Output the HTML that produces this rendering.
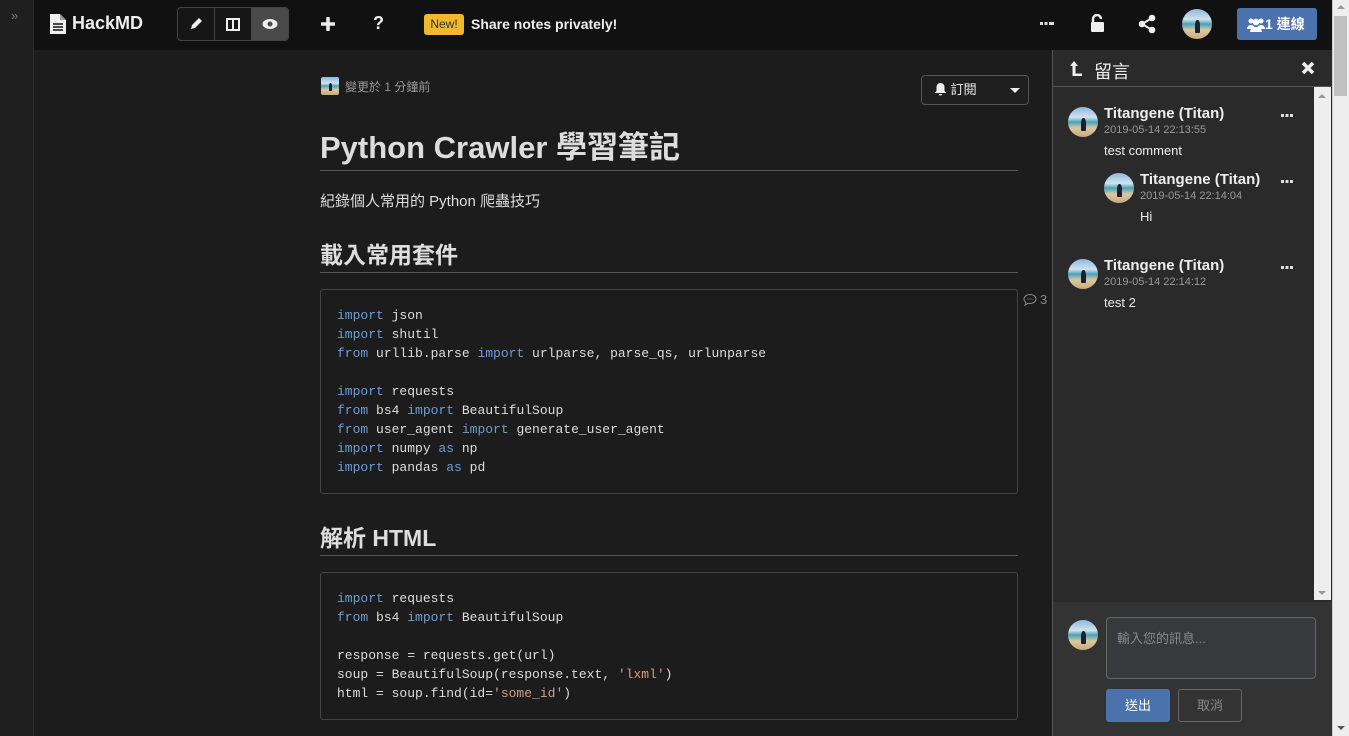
<!DOCTYPE html><html><head><meta charset="utf-8"><style>
*{margin:0;padding:0;box-sizing:border-box}
body{width:1349px;height:736px;overflow:hidden;background:#1c1c1c;font-family:"Liberation Sans","Noto Sans CJK TC",sans-serif;color:#ddd;position:relative}
.a{position:absolute}
.av{position:absolute;border-radius:50%;background:linear-gradient(#8fb8dc 0%,#cfe3ee 35%,#4aa0b8 50%,#d9c9a3 70%,#caa97a 100%);overflow:hidden}
.av:after{content:"";position:absolute;left:42%;top:35%;width:18%;height:45%;background:#1a2030;border-radius:40% 40% 10% 10%}
.code{position:absolute;left:320px;width:698px;border:1px solid #444;border-radius:3px;background:#1c1c1c;font-family:"Liberation Mono","DejaVu Sans Mono",monospace;font-size:13px;line-height:19px;color:#ddd;padding:16px 16px;white-space:pre}
.k{color:#6d9cd4}.s{color:#d69d85}
.h{position:absolute;left:320px;width:698px;border-bottom:1px solid #555;font-weight:bold;color:#ddd}
.nm{font-weight:bold;font-size:15px;color:#eee}
.dt{font-size:11px;color:#999}
.dots{position:absolute;width:12px;height:3px;background:linear-gradient(90deg,#ddd 0,#ddd 3px,transparent 3px,transparent 4.5px,#ddd 4.5px,#ddd 7.5px,transparent 7.5px,transparent 9px,#ddd 9px)}
</style></head><body>
<div class="a" style="left:0;top:0;width:34px;height:736px;background:#1f1f1f;border-right:1px solid #2c2c2c"></div>
<div class="a" style="left:11px;top:8px;color:#777;font-size:13px">»</div>
<div class="a" style="left:34px;top:0;width:1298px;height:50px;background:#111"></div>
<svg class="a" style="left:49px;top:13px" width="18" height="22" viewBox="0 0 18 22"><path d="M1 1h10l6 6v14H1z" fill="#eee"/><path d="M11 1v6h6" fill="#999"/><path d="M4 11h10M4 14h10M4 17h10" stroke="#111" stroke-width="1.5"/></svg>
<div class="a" style="left:72px;top:13px;font-size:18px;font-weight:bold;color:#eee">HackMD</div>
<div class="a" style="left:177px;top:7px;width:112px;height:34px;border:1px solid #444;border-radius:4px;overflow:hidden;background:#161616">
 <div class="a" style="left:36px;top:0;width:1px;height:34px;background:#444"></div>
 <div class="a" style="left:73px;top:0;width:39px;height:34px;background:#4a4a4a"></div>
 <svg class="a" style="left:11px;top:9px" width="14" height="14" viewBox="0 0 14 14"><path d="M2 12l1-4 7-7 3 3-7 7z" fill="#eee"/></svg>
 <svg class="a" style="left:48px;top:10px" width="14" height="13"><rect x="1" y="1" width="12" height="11" fill="none" stroke="#eee" stroke-width="2"/><path d="M7 1v11" stroke="#eee" stroke-width="2"/></svg>
 <svg class="a" style="left:84px;top:10px" width="16" height="12"><ellipse cx="8" cy="6" rx="7.5" ry="5" fill="#eee"/><circle cx="8" cy="6" r="2.5" fill="#4a4a4a"/></svg>
</div>
<svg class="a" style="left:320px;top:16px" width="16" height="16"><path d="M8 1v14M1 8h14" stroke="#eee" stroke-width="3.5"/></svg>
<div class="a" style="left:373px;top:13px;font-size:18px;font-weight:bold;color:#eee">?</div>
<div class="a" style="left:424px;top:14px;width:40px;height:21px;background:#f0b92d;border-radius:3px;color:#333;font-size:12px;text-align:center;line-height:21px">New!</div>
<div class="a" style="left:471px;top:16px;font-size:14px;font-weight:bold;color:#eee">Share notes privately!</div>
<div class="dots" style="left:1040px;top:22px;width:14px"></div>
<svg class="a" style="left:1090px;top:14px" width="15" height="19"><path d="M3 8V5a4 4 0 0 1 8 0" stroke="#eee" stroke-width="2.4" fill="none"/><rect x="1" y="8" width="13" height="10" rx="1" fill="#eee"/></svg>
<svg class="a" style="left:1138px;top:14px" width="18" height="20"><circle cx="14" cy="4" r="3.3" fill="#eee"/><circle cx="4" cy="10" r="3.3" fill="#eee"/><circle cx="14" cy="16" r="3.3" fill="#eee"/><path d="M14 4L4 10l10 6" stroke="#eee" stroke-width="2" fill="none"/></svg>
<div class="av" style="left:1182px;top:9px;width:30px;height:30px"></div>
<div class="a" style="left:1237px;top:8px;width:80px;height:32px;background:#4a72ac;border-radius:3px;color:#fff;font-size:14px;font-weight:bold;line-height:32px;padding-left:10px">
<svg style="vertical-align:-3px" width="18" height="15"><circle cx="4" cy="4" r="2.5" fill="#fff"/><circle cx="14" cy="4" r="2.5" fill="#fff"/><circle cx="9" cy="5" r="3.3" fill="#fff"/><path d="M0 12a4 4 0 0 1 8 0zM10 12a4 4 0 0 1 8 0z" fill="#fff"/><path d="M3 15a6 5 0 0 1 12 0z" fill="#fff"/></svg>1 連線</div>

<div class="av" style="left:321px;top:77px;width:18px;height:18px;border-radius:2px"></div>
<div class="a" style="left:345px;top:78px;font-size:12px;color:#999">變更於 1 分鐘前</div>
<div class="a" style="left:921px;top:75px;width:108px;height:30px;border:1px solid #555;border-radius:4px;background:#1f1f1f;font-size:13px;color:#eee;line-height:28px;padding-left:12px">
<svg style="vertical-align:-2px" width="13" height="14"><path d="M6.5 1a4 4 0 0 1 4 4v4l2 2H0.5l2-2V5a4 4 0 0 1 4-4zM5 12h3a1.5 1.5 0 0 1-3 0z" fill="#eee"/></svg> 訂閱<span class="a" style="right:8px;top:12px;border:5px solid transparent;border-top-color:#eee;border-bottom:0"></span></div>

<div class="h" style="top:122px;height:49px;font-size:31px;font-weight:600">Python Crawler 學習筆記</div>
<div class="a" style="left:320px;top:190px;font-size:15px;color:#ddd">紀錄個人常用的 Python 爬蟲技巧</div>
<div class="h" style="top:236px;height:37px;font-size:23px">載入常用套件</div>
<div class="code" style="top:289px;height:205px"><span class="k">import</span> json
<span class="k">import</span> shutil
<span class="k">from</span> urllib.parse <span class="k">import</span> urlparse, parse_qs, urlunparse

<span class="k">import</span> requests
<span class="k">from</span> bs4 <span class="k">import</span> BeautifulSoup
<span class="k">from</span> user_agent <span class="k">import</span> generate_user_agent
<span class="k">import</span> numpy <span class="k">as</span> np
<span class="k">import</span> pandas <span class="k">as</span> pd</div>
<svg class="a" style="left:1023px;top:293px" width="14" height="13"><path d="M7 1.5c3.3 0 6 2 6 4.5S10.3 10.5 7 10.5c-.6 0-1.2 0-1.7-.2L2 12l1-2.5C1.8 8.6 1 7.4 1 6c0-2.5 2.7-4.5 6-4.5z" fill="none" stroke="#888"/><path d="M4.5 6h1M6.5 6h1M8.5 6h1" stroke="#888"/></svg>
<div class="a" style="left:1040px;top:292px;font-size:13px;color:#888">3</div>
<div class="h" style="top:519px;height:37px;font-size:23px">解析 HTML</div>
<div class="code" style="top:572px;height:148px"><span class="k">import</span> requests
<span class="k">from</span> bs4 <span class="k">import</span> BeautifulSoup

response = requests.get(url)
soup = BeautifulSoup(response.text, <span class="s">'lxml'</span>)
html = soup.find(id=<span class="s">'some_id'</span>)</div>

<div class="a" style="left:1052px;top:50px;width:280px;height:686px;background:#2a2a2a;border-left:1px solid #555"></div>
<div class="a" style="left:1053px;top:86px;width:279px;height:1px;background:#555"></div>
<svg class="a" style="left:1069px;top:60px" width="14" height="17"><path d="M1 6l4-5 4 5H6.5v7.5H13V16H3.5V6z" fill="#eee"/></svg>
<div class="a" style="left:1094px;top:58px;font-size:18px;color:#eee">留言</div>
<svg class="a" style="left:1301px;top:61px" width="14" height="14"><path d="M2 2l10 10M12 2L2 12" stroke="#eee" stroke-width="3.5"/></svg>
<div class="a" style="left:1314px;top:87px;width:17px;height:513px;background:#eee"></div>
<div class="a" style="left:1318px;top:94px;border:4px solid transparent;border-bottom-color:#999;border-top:0"></div>
<div class="a" style="left:1318px;top:591px;border:4px solid transparent;border-top-color:#999;border-bottom:0"></div>
<div class="a" style="left:1332px;top:0;width:17px;height:736px;background:#eee;border-left:1px solid #ccc"></div>
<div class="a" style="left:1334px;top:16px;width:13px;height:80px;background:#c1c1c1"></div>
<div class="a" style="left:1337px;top:5px;border:4px solid transparent;border-bottom-color:#999;border-top:0"></div>
<div class="a" style="left:1337px;top:726px;border:4px solid transparent;border-top-color:#555;border-bottom:0"></div>

<div class="av" style="left:1068px;top:107px;width:30px;height:30px"></div>
<div class="a nm" style="left:1104px;top:105px">Titangene (Titan)</div>
<div class="a dt" style="left:1104px;top:124px">2019-05-14 22:13:55</div>
<div class="a" style="left:1104px;top:143px;font-size:13px;color:#eee">test comment</div>
<div class="dots" style="left:1281px;top:114px"></div>
<div class="av" style="left:1104px;top:173px;width:30px;height:30px"></div>
<div class="a nm" style="left:1140px;top:171px">Titangene (Titan)</div>
<div class="a dt" style="left:1140px;top:190px">2019-05-14 22:14:04</div>
<div class="a" style="left:1140px;top:209px;font-size:13px;color:#eee">Hi</div>
<div class="dots" style="left:1281px;top:180px"></div>
<div class="av" style="left:1068px;top:259px;width:30px;height:30px"></div>
<div class="a nm" style="left:1104px;top:257px">Titangene (Titan)</div>
<div class="a dt" style="left:1104px;top:276px">2019-05-14 22:14:12</div>
<div class="a" style="left:1104px;top:295px;font-size:13px;color:#eee">test 2</div>
<div class="dots" style="left:1281px;top:266px"></div>

<div class="a" style="left:1053px;top:602px;width:279px;height:134px;background:#333"></div>
<div class="av" style="left:1068px;top:620px;width:30px;height:30px"></div>
<div class="a" style="left:1106px;top:617px;width:210px;height:62px;border:1px solid #666;border-radius:4px;background:#38393c;font-size:13px;color:#888;padding:10px 10px">輸入您的訊息...</div>
<div class="a" style="left:1106px;top:689px;width:64px;height:33px;background:#4a72ac;border-radius:3px;color:#fff;font-size:13px;text-align:center;line-height:33px">送出</div>
<div class="a" style="left:1178px;top:689px;width:64px;height:33px;border:1px solid #666;border-radius:3px;color:#888;font-size:13px;text-align:center;line-height:31px">取消</div>
</body></html>
